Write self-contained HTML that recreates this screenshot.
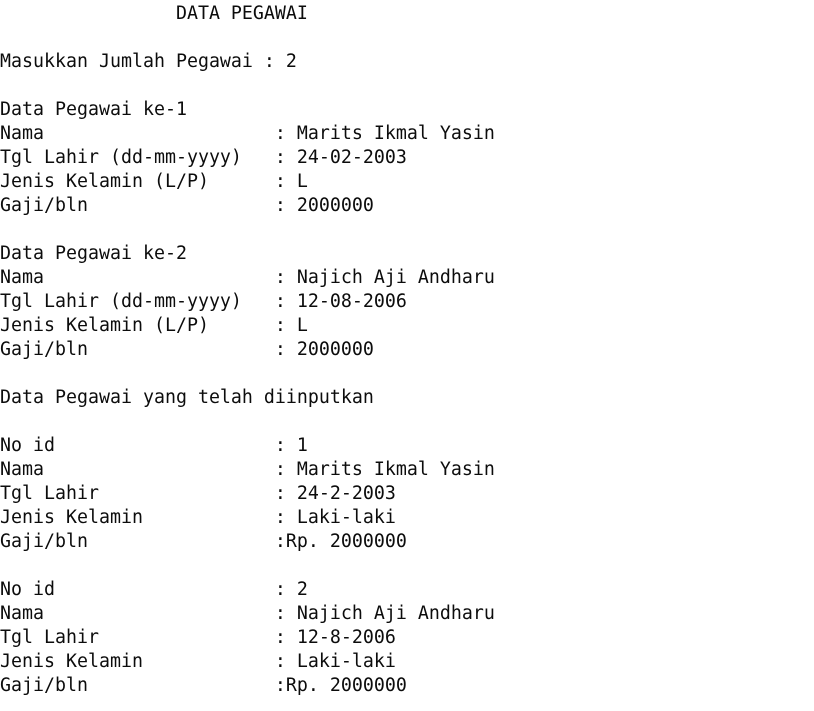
<!DOCTYPE html>
<html><head><meta charset="utf-8"><style>
html,body{margin:0;padding:0;background:#fff;width:814px;height:711px;overflow:hidden}
pre{margin:0;padding:2px 0 0 0;font-family:"DejaVu Sans Mono","Liberation Mono",monospace;font-size:18.27px;line-height:24px;color:#0c0c0c}
</style></head><body><pre>                DATA PEGAWAI

Masukkan Jumlah Pegawai : 2

Data Pegawai ke-1
Nama                     : Marits Ikmal Yasin
Tgl Lahir (dd-mm-yyyy)   : 24-02-2003
Jenis Kelamin (L/P)      : L
Gaji/bln                 : 2000000

Data Pegawai ke-2
Nama                     : Najich Aji Andharu
Tgl Lahir (dd-mm-yyyy)   : 12-08-2006
Jenis Kelamin (L/P)      : L
Gaji/bln                 : 2000000

Data Pegawai yang telah diinputkan

No id                    : 1
Nama                     : Marits Ikmal Yasin
Tgl Lahir                : 24-2-2003
Jenis Kelamin            : Laki-laki
Gaji/bln                 :Rp. 2000000

No id                    : 2
Nama                     : Najich Aji Andharu
Tgl Lahir                : 12-8-2006
Jenis Kelamin            : Laki-laki
Gaji/bln                 :Rp. 2000000
</pre></body></html>
